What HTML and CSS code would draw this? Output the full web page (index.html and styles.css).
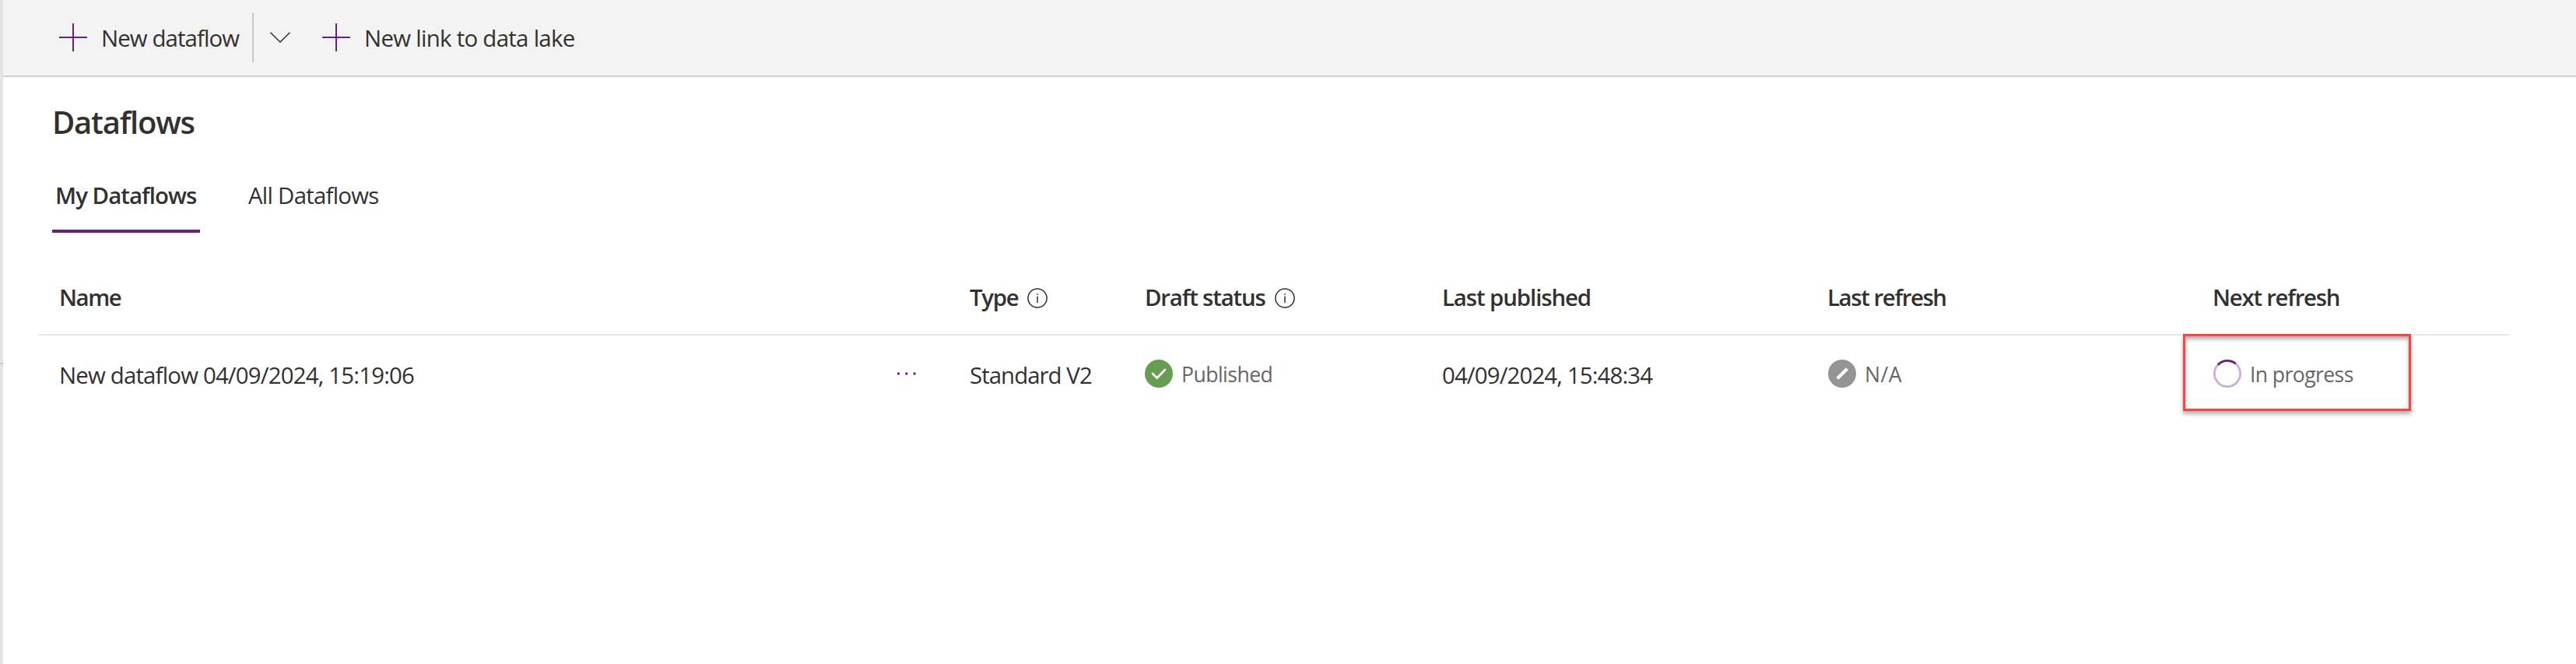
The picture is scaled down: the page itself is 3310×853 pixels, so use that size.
FILE: index.html
```html
<!DOCTYPE html>
<html lang="en">
<head>
<meta charset="utf-8">
<title>Dataflows</title>
<link rel="stylesheet" href="styles.css">
</head>
<body>
<div class="app">
  <div class="rail"><div class="rail-mark"></div></div>
  <div class="page">
    <div class="toolbar">
      <svg class="plus" width="36" height="36" viewBox="0 0 36 36"><path d="M18 0V36M0 18H36"/></svg>
      <span class="cmd t-new">New dataflow</span>
      <div class="divider"></div>
      <svg class="chevron" width="26" height="14" viewBox="0 0 26 14"><path d="M.5 .7L13 13L25.500 .7"/></svg>
      <svg class="plus second" width="36" height="36" viewBox="0 0 36 36"><path d="M18 0V36M0 18H36"/></svg>
      <span class="cmd t-link">New link to data lake</span>
    </div>
    <h1 class="title"><span class="t-title">Dataflows</span></h1>
    <div class="tabs">
      <div class="tab active"><span class="t-my">My Dataflows</span></div>
      <div class="tab"><span class="t-all">All Dataflows</span></div>
    </div>
    <div class="table">
      <div class="row head">
        <div class="cell"><span class="t-name">Name</span></div>
        <div class="cell"><span class="t-type">Type</span><svg class="info" width="26" height="26" viewBox="0 0 26 26"><circle cx="13" cy="13" r="12.100"/><path d="M13 10.500V19M13 7V8.700"/></svg></div>
        <div class="cell"><span class="t-draft">Draft status</span><svg class="info" width="26" height="26" viewBox="0 0 26 26"><circle cx="13" cy="13" r="12.100"/><path d="M13 10.500V19M13 7V8.700"/></svg></div>
        <div class="cell"><span class="t-lp">Last published</span></div>
        <div class="cell"><span class="t-lr">Last refresh</span></div>
        <div class="cell"><span class="t-nr">Next refresh</span></div>
      </div>
      <div class="row body">
        <div class="cell name"><span class="t-flow">New dataflow 04/09/2024, 15:19:06</span><svg class="more" width="26" height="4" viewBox="0 0 26 4"><circle cx="2.500" cy="2" r="1.700"/><circle cx="12.800" cy="2" r="1.700"/><circle cx="23" cy="2" r="1.700"/></svg></div>
        <div class="cell"><span class="t-std">Standard V2</span></div>
        <div class="cell status"><svg class="icon" width="36" height="36" viewBox="0 0 36 36"><circle cx="18" cy="18" r="18" fill="#669d50"/><path d="M10 18L15.700 23.500L26 13" fill="none" stroke="#fff" stroke-width="2.700" stroke-linecap="round"/></svg><span class="t-pub">Published</span></div>
        <div class="cell"><span class="t-date">04/09/2024, 15:48:34</span></div>
        <div class="cell status shifted"><svg class="icon" width="36" height="36" viewBox="0 0 36 36"><circle cx="18" cy="18" r="18" fill="#949494"/><path d="M11.800 24.300L24.500 11.700" stroke="#fff" stroke-width="4.200"/></svg><span class="t-na">N/A</span></div>
        <div class="cell status shifted"><svg class="icon" width="36" height="36" viewBox="0 0 36 36" fill="none" stroke-width="2.800"><circle cx="18" cy="18" r="16.600" stroke="#c9aed6"/><path d="M5.800 6.800A16.600 16.600 0 0 1 28.700 5.300" stroke="#68217a"/></svg><span class="t-prog">In progress</span><div class="highlight"></div></div>
      </div>
    </div>
  </div>
</div>
</body>
</html>
```
FILE: styles.css
```css
* { box-sizing: border-box; }
body { margin: 0; background: #fff; color: #323130; font: 29.4px/40px "Open Sans", "Noto Sans", sans-serif; overflow: hidden; }
svg { display: block; flex: none; }
span { white-space: nowrap; }
.app { display: flex; height: 853px; }
.rail { width: 4px; flex: none; background: #e4e4e4; padding-top: 466px; }
.rail-mark { height: 2px; background: #c8c8c8; }
.page { flex: 1; min-width: 0; }

/* Command bar */
.toolbar { display: flex; align-items: center; height: 99px; padding: 0 0 1px 72px; background: #f3f3f3; border-bottom: 2px solid #d0d0d0; }
.plus { fill: none; stroke: #68217a; stroke-width: 2; }
.plus.second { margin-left: 41px; }
.cmd { margin-left: 17px; padding: 2px 0 0 1px; }
.t-new { width: 195px; letter-spacing: -.9px; }
.t-link { letter-spacing: -.7px; }
.divider { width: 2px; height: 63px; background: #c8c8c8; }
.chevron { margin-left: 21px; fill: none; stroke: #323130; stroke-width: 1.5; }

/* Heading and tabs */
.title { margin: 29px 0 0 63px; font-size: 40px; line-height: 57px; font-weight: 600; }
.t-title { letter-spacing: -1.2px; }
.tabs { display: flex; margin: 20px 0 0 63px; }
.tab { height: 94px; padding: 26px 4px 24px; border-bottom: 4px solid transparent; }
.tab.active { width: 190px; border-color: #68217a; font-weight: 600; margin-right: 58px; }
.t-my { letter-spacing: -.95px; }
.t-all { letter-spacing: -.75px; }

/* Table */
.table { margin: 35px 0 0 45px; width: 3175px; }
.row { display: grid; grid-template-columns: 1170px 225px 382px 495px 495px 1fr; padding-left: 27px; }
.head { height: 97px; padding-top: 1px; border-bottom: 2px solid #e8e8e8; font-weight: 600; }
.body { height: 101px; }
.cell { display: flex; align-items: center; }
.name { justify-content: space-between; padding-right: 68px; }
.info { margin: 1px 0 0 12px; fill: none; stroke: #323130; stroke-width: 1.5; }
.more { margin-top: -4px; fill: #68217a; }
.t-name { letter-spacing: -1.45px; }
.t-type { letter-spacing: -1.3px; }
.t-draft { letter-spacing: -1.18px; }
.t-lp { letter-spacing: -1.1px; }
.t-lr { letter-spacing: -1.4px; }
.t-nr { letter-spacing: -1.25px; }
.t-flow { letter-spacing: -.82px; }
.t-std { letter-spacing: -.95px; }
.t-date { letter-spacing: -.87px; }

/* Status cells */
.status { position: relative; font-size: 26.6px; color: #666; padding-bottom: 3px; }
.shifted { padding-left: 1px; }
.icon { margin-right: 11px; }
.t-pub { letter-spacing: -.55px; }
.t-na { letter-spacing: .5px; }
.t-prog { letter-spacing: -.6px; }
.status span { padding-top: 2px; }
.highlight { position: absolute; left: -38px; top: -2px; width: 293px; height: 99px; border: 3px solid #ff4343; box-shadow: 0 4px 5px rgba(0,0,0,.3), inset 0 4px 5px rgba(0,0,0,.3); }
```
